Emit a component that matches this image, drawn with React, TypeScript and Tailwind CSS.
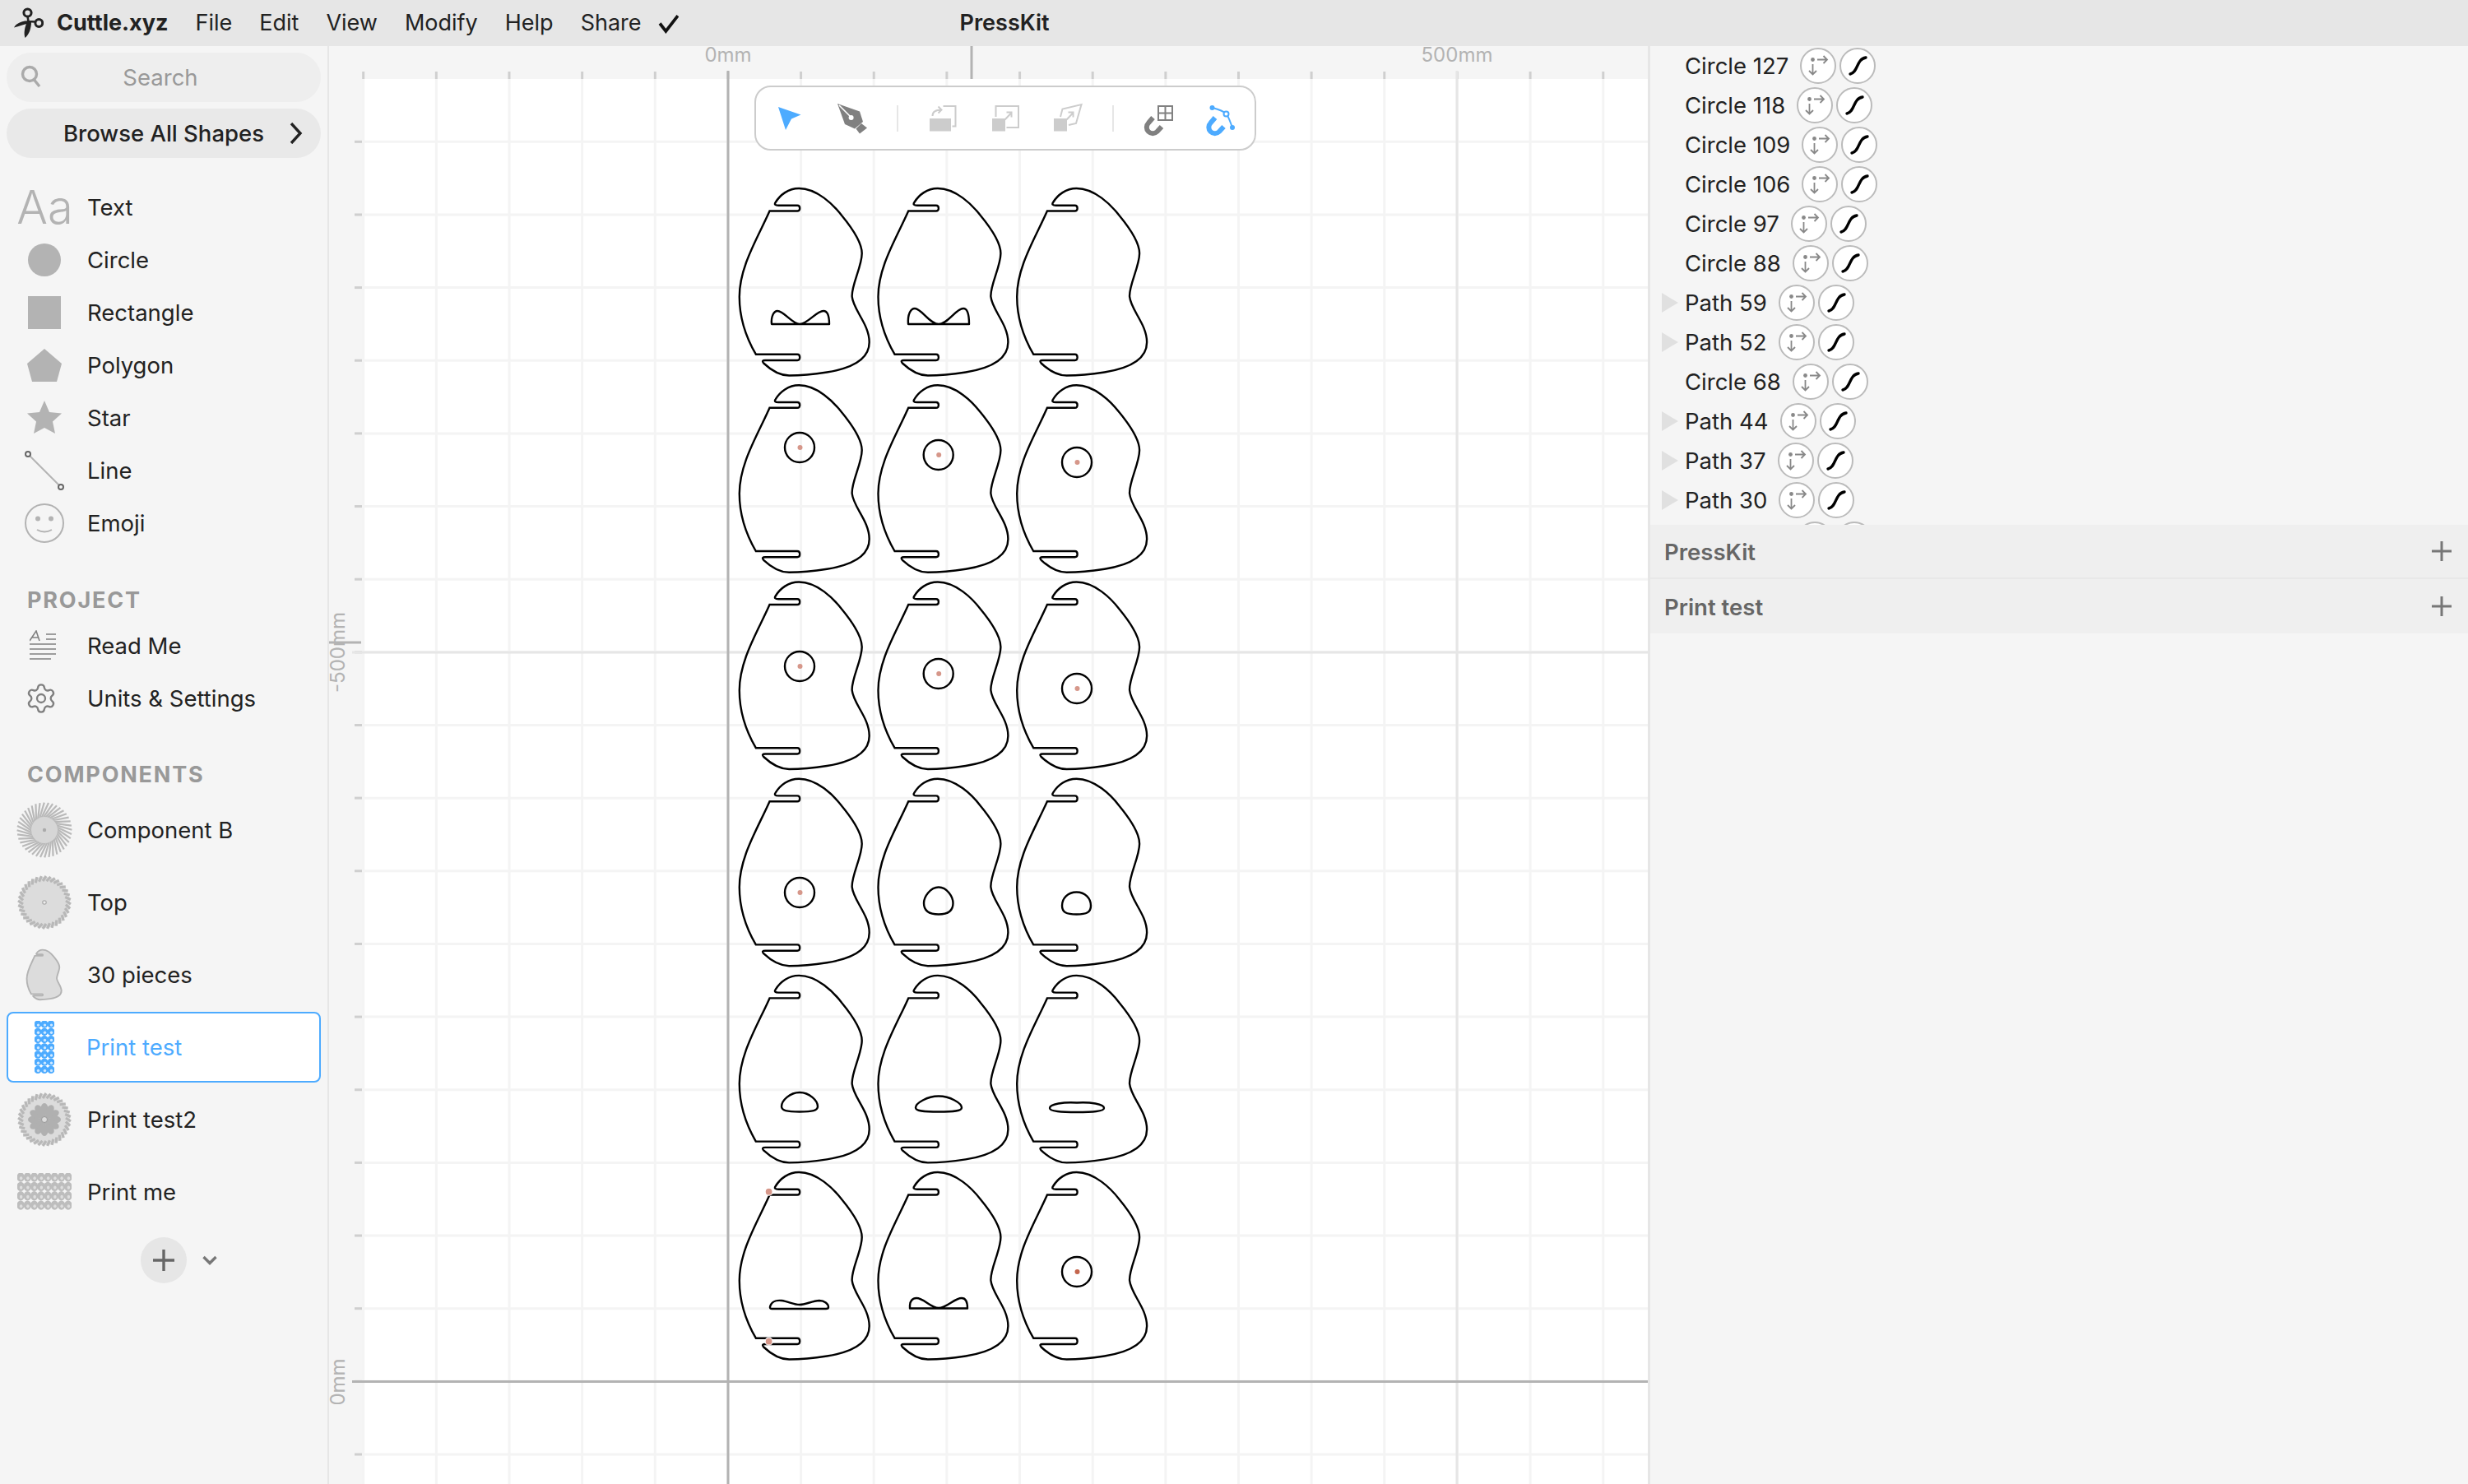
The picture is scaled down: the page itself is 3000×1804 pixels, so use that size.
import React from "react";
import { Settings } from "lucide-react";

const FONT = "font-['Inter','Liberation_Sans',sans-serif]";

const PIECE =
  "M-2 20.7 L-25 20.7 Q-31 20.7 -28.5 17 C-23 8 -13 0 0 0 C22 0 42 20 52 33 C66 50 76.5 66 76.5 79 C76.5 95 63.5 118 64.5 131.7 C66 148 85.5 165 85.5 187 C85.5 209 62 219 34 223.5 C15 226.5 2 227.5 -12 227.5 C-24 227.5 -35 220 -43 212.5 Q-46 209 -41 209 L-2 209 Q1 209 1 205.3 Q1 201.7 -2 201.7 L-52.4 201.7 C-65 180 -72.4 158 -72.4 131.7 C-72.4 95 -50 60 -35.7 27.5 L-2 27.5 Q1 27.5 1 24 Q1 20.7 -2 20.7 Z";

const COLS = [971.2, 1139.9, 1308.6];
const ROW_TOPS = [229, 468.3, 707.5, 946.7, 1185.9, 1425];
const H_GRID = Array.from({ length: 19 }, (_, i) => 172.3 + i * 88.65);
const V_GRID = Array.from({ length: 18 }, (_, i) => 441.7 + i * 88.65);

function Piece({ x, y }: { x: number; y: number }) {
  return <path d={PIECE} transform={`translate(${x} ${y})`} fill="none" stroke="#000" strokeWidth={2.4} />;
}

function Hole({ x, y, dark }: { x: number; y: number; dark?: boolean }) {
  return (
    <g>
      <circle cx={x} cy={y} r={18} fill="none" stroke="#000" strokeWidth={2.4} />
      <circle cx={x + 0.5} cy={y} r={3} fill={dark ? "#c4664e" : "#d6978a"} />
    </g>
  );
}

function CanvasDrawing() {
  return (
    <svg viewBox="400 56 1603 1748" className="block w-full h-full">
      <rect x={400} y={56} width={1603} height={1748} fill="#f5f5f5" />
      <rect x={443} y={96} width={1560} height={1708} fill="#fff" />
      {V_GRID.map((x, i) => (
        <g key={i}>
          <line x1={x} x2={x} y1={96} y2={1804} stroke="#f4f4f4" strokeWidth={3} />
          <line x1={x} x2={x} y1={87} y2={96} stroke="#cfcfcf" strokeWidth={3} />
        </g>
      ))}
      {H_GRID.map((y, i) => (
        <g key={i}>
          <line x1={443} x2={2003} y1={y} y2={y} stroke="#f4f4f4" strokeWidth={3} />
          <line x1={431} x2={440} y1={y} y2={y} stroke="#cfcfcf" strokeWidth={3} />
        </g>
      ))}
      <line x1={1771} x2={1771} y1={86} y2={1804} stroke="#e6e6e6" strokeWidth={3} />
      <line x1={428} x2={2003} y1={792.9} y2={792.9} stroke="#e6e6e6" strokeWidth={3} />
      <line x1={885} x2={885} y1={86} y2={1804} stroke="#b3b3b3" strokeWidth={3} />
      <line x1={428} x2={2003} y1={1679.5} y2={1679.5} stroke="#b3b3b3" strokeWidth={3} />
      <line x1={1181} x2={1181} y1={56} y2={96} stroke="#b3b3b3" strokeWidth={3} />
      <line x1={400} x2={439} y1={781} y2={781} stroke="#b3b3b3" strokeWidth={3} />

      <g fontFamily="Inter, 'Liberation Sans', sans-serif" fontSize={24} fill="#b3b3b3" textAnchor="middle">
        <text x={885} y={75}>0mm</text>
        <text x={1771} y={75}>500mm</text>
        <text transform="translate(419 793) rotate(-90)">-500mm</text>
        <text transform="translate(419 1680) rotate(-90)">0mm</text>
      </g>

      {ROW_TOPS.map((y, r) => COLS.map((x, c) => <Piece key={`${r}-${c}`} x={x} y={y} />))}

      <g fill="none" stroke="#000" strokeWidth={2.4} strokeLinejoin="round">
        <path d="M938 394 C937 384 941 378 945 378 C953 378 963 394 972 394 C982 394 992 378 1001 378 C1007 378 1008 386 1008 394 Z" />
        <path d="M1104 394 C1103 382 1107 375 1112 375 C1120 375 1130 394 1141 394 C1152 394 1162 375 1171 375 C1177 375 1178 384 1178 394 Z" />
        <path d="M1141 1078.5 C1151 1078.5 1158.5 1090 1158.5 1098 C1158.5 1108 1152 1111.5 1141 1111.5 C1130 1111.5 1123 1108 1123 1098 C1123 1090 1131 1078.5 1141 1078.5 Z" />
        <path d="M1308.6 1084.5 C1319 1084.5 1326 1092 1326 1101 C1326 1109 1321 1111.5 1308.6 1111.5 C1296 1111.5 1291 1109 1291 1101 C1291 1092 1298 1084.5 1308.6 1084.5 Z" />
        <path d="M972 1328 C984 1328 994 1338 994 1345 C994 1350 988 1351.5 972 1351.5 C956 1351.5 950 1350 950 1345 C950 1338 960 1328 972 1328 Z" />
        <path d="M1141 1332.5 C1155 1332.5 1169 1341 1169 1346.5 C1169 1350.5 1160 1351.5 1141 1351.5 C1122 1351.5 1113 1350.5 1113 1346.5 C1113 1341 1127 1332.5 1141 1332.5 Z" />
        <path d="M1309 1340.5 C1325 1339.5 1342 1342 1342 1347 C1342 1351 1328 1352 1309 1352 C1290 1352 1276 1351 1276 1347 C1276 1342 1293 1339.5 1309 1340.5 Z" />
        <path d="M938 1591 Q935 1591 936.5 1587 C939 1581 946 1580.5 950 1581 C958 1582 965 1586 972 1586 C979 1586 987 1581.5 996 1581 C1002 1581 1007 1585 1007 1589 Q1007 1591 1004 1591 Z" />
        <path d="M1106 1590.5 L1106 1587 C1106 1582 1109 1578 1114 1578 C1123 1578 1131 1590 1141 1590 C1151 1590 1160 1578 1169 1578 C1174 1578 1176 1582 1176 1590.5 Z" />
      </g>

      <Hole x={972} y={544} />
      <Hole x={1140.7} y={553} />
      <Hole x={1309} y={562} />
      <Hole x={972} y={810} />
      <Hole x={1140.7} y={819} />
      <Hole x={1309} y={837} />
      <Hole x={972} y={1085} />
      <Hole x={1309} y={1546} dark />

      <circle cx={934.6} cy={1448.7} r={4.5} fill="#d6978a" stroke="#fff" strokeWidth={1.2} />
      <circle cx={934.6} cy={1630.7} r={4.5} fill="#d6978a" stroke="#fff" strokeWidth={1.2} />
    </svg>
  );
}

function ToolIcon({ cx, children }: { cx: number; children: React.ReactNode }) {
  return (
    <svg viewBox={`${cx - 38} 106 76 75`} className="block w-[76px] h-[75px] shrink-0">
      {children}
    </svg>
  );
}

function Separator() {
  return (
    <div className="w-[34px] flex justify-center shrink-0">
      <div className="w-[2px] h-[32px] bg-[#e6e6e6]" />
    </div>
  );
}

function Toolbar() {
  const light = "#cccccc";
  return (
    <div className="absolute left-[517px] top-[48px] w-[610px] h-[79px] rounded-[20px] border-2 border-[#cccccc] bg-white flex items-center pl-[3px]">
      <ToolIcon cx={960}>
        <path d="M946 130 L973.5 139.5 L962 144.5 L955 158 Z" fill="#4dabff" />
      </ToolIcon>
      <ToolIcon cx={1036}>
        <path d="M1018 126 L1045 135.5 L1049 148 L1039 156.5 L1027 151 Z" fill="#808080" />
        <path d="M1020 128 L1034 142" stroke="#fff" strokeWidth={1.6} />
        <circle cx={1034.6} cy={143} r={3} fill="#fff" />
        <path d="M1047 150 L1054 155.5 L1045 162.5 L1040.5 156.5 Z" fill="#808080" />
      </ToolIcon>
      <Separator />
      <ToolIcon cx={1146}>
        <rect x={1130} y={144} width={26} height={15.5} fill={light} />
        <path d="M1146.5 129 L1161.5 129 L1161.5 153.5 L1157.5 153.5" fill="none" stroke={light} strokeWidth={2} />
        <path d="M1133.5 141 C1133.5 136 1137 133.5 1144 133.5 M1140.5 129.5 L1144.5 133.5 L1140.5 137.5" fill="none" stroke={light} strokeWidth={2} />
      </ToolIcon>
      <ToolIcon cx={1222}>
        <rect x={1206} y={144} width={16} height={15.5} fill={light} />
        <path d="M1210.5 142 L1210.5 129 L1238 129 L1238 155 L1223.5 155" fill="none" stroke={light} strokeWidth={2} />
        <path d="M1221.5 145.5 L1229.5 137 M1223.5 136.5 L1229.5 136.5 L1229.5 142.5" fill="none" stroke={light} strokeWidth={2} />
      </ToolIcon>
      <ToolIcon cx={1299}>
        <rect x={1282} y={144} width={16} height={15.5} fill={light} />
        <path d="M1290 142 L1292.5 132.5 L1315.5 127 L1309 150 L1300 152" fill="none" stroke={light} strokeWidth={2} />
        <path d="M1297.5 145.5 L1305.5 137 M1299.5 136.5 L1305.5 136.5 L1305.5 142.5" fill="none" stroke={light} strokeWidth={2} />
      </ToolIcon>
      <Separator />
      <ToolIcon cx={1407}>
        <path d="M1400.5 143 L1395 149.5 A7.4 7.4 0 0 0 1405.5 160 L1411 154" fill="none" stroke="#808080" strokeWidth={6} />
        <rect x={1407} y={129} width={17} height={17} fill="#fff" stroke="#808080" strokeWidth={2} />
        <path d="M1415.5 129 L1415.5 146 M1407 137.5 L1424 137.5" stroke="#808080" strokeWidth={2} />
      </ToolIcon>
      <ToolIcon cx={1483}>
        <path d="M1476 143 L1470.5 149.5 A7.4 7.4 0 0 0 1481 160 L1486.5 154" fill="none" stroke="#4dabff" strokeWidth={6} />
        <path d="M1473 131 C1480 133 1486 135 1489.5 138 C1493 143 1495 150 1497 155" fill="none" stroke="#4dabff" strokeWidth={2} />
        <circle cx={1472.5} cy={131} r={3} fill="#4dabff" />
        <circle cx={1489.5} cy={138.5} r={3} fill="#fff" stroke="#4dabff" strokeWidth={2} />
        <circle cx={1497} cy={155} r={3} fill="#4dabff" />
      </ToolIcon>
    </div>
  );
}

function Logo() {
  return (
    <svg viewBox="18 8 36 40" className="w-[36px] h-[40px] shrink-0">
      <circle cx={34.5} cy={15.5} r={4.6} fill="none" stroke="#222" strokeWidth={3} />
      <circle cx={48.3} cy={28} r={4.4} fill="none" stroke="#222" strokeWidth={3} />
      <path d="M34.5 20 L35.5 26 L44 26.5" fill="none" stroke="#222" strokeWidth={2.6} />
      <path d="M18 33.5 C21 28 28 25 38 25 L38 28 C30 29.5 24 32 18 33.5 Z" fill="#222" />
      <path d="M34 26 L39 27 C39 34 36.5 42 31.5 46 C29.5 41 31 33 34 26 Z" fill="#222" />
    </svg>
  );
}

function Header() {
  const menus = ["File", "Edit", "View", "Modify", "Help", "Share"];
  return (
    <div className="h-14 bg-[#e6e6e6] flex items-center pl-[17px] shrink-0 text-[27px] text-[#222]">
      <Logo />
      <span className="ml-[16px] font-bold pt-[1px]">Cuttle.xyz</span>
      <div className="ml-[33px] flex gap-[33px] pt-[1px]">
        {menus.map((m) => (
          <span key={m}>{m}</span>
        ))}
      </div>
      <svg viewBox="0 0 24 24" className="ml-[20px] w-[25px] h-[25px]" fill="none" stroke="#111" strokeWidth={3.6}>
        <path d="M2 12 L9 21 L23 3" />
      </svg>
      <span className="ml-[342px] font-semibold pt-[1px]">PressKit</span>
    </div>
  );
}

function Search() {
  return (
    <div className="h-[60px] rounded-[30px] bg-[#eeeeee] relative flex items-center justify-center text-[27.5px] text-[#999]">
      <svg viewBox="0 0 28 28" className="absolute left-[16px] top-[15px] w-[28px] h-[28px]" fill="none" stroke="#aaa" strokeWidth={3.4}>
        <circle cx={12} cy={11} r={8.5} />
        <path d="M17.5 18 L24 26" />
      </svg>
      <span className="mr-[8px] pt-[2px]">Search</span>
    </div>
  );
}

function ShapeIcon({ kind }: { kind: string }) {
  const gray = "#b3b3b3";
  if (kind === "text")
    return <span className="text-[56px] font-light text-[#b3b3b3] leading-none ml-[1px]">Aa</span>;
  return (
    <svg viewBox="0 0 52 52" className="w-[52px] h-[52px]">
      {kind === "circle" && <circle cx={26} cy={26} r={20} fill={gray} />}
      {kind === "rect" && <rect x={6} y={6} width={40} height={40} fill={gray} />}
      {kind === "polygon" && <path d="M26 6 L47 24 L41 46 L11 46 L5 24 Z" fill={gray} />}
      {kind === "star" && <path d="M26 5 L32 19 L47 20.5 L36 30.5 L39 45 L26 38 L13 45 L16 30.5 L5 20.5 L20 19 Z" fill={gray} />}
      {kind === "line" && (
        <g>
          <line x1={7} y1={7} x2={45} y2={45} stroke={gray} strokeWidth={2} />
          <circle cx={6} cy={6} r={3} fill="#f5f5f5" stroke="#666" strokeWidth={2} />
          <circle cx={46} cy={46} r={3} fill="#f5f5f5" stroke="#666" strokeWidth={2} />
        </g>
      )}
      {kind === "emoji" && (
        <g>
          <circle cx={26} cy={26} r={23} fill="none" stroke={gray} strokeWidth={2} />
          <circle cx={18} cy={20.5} r={3} fill={gray} />
          <circle cx={34} cy={20.5} r={3} fill={gray} />
          <path d="M17 34 Q26 39 35 34" fill="none" stroke={gray} strokeWidth={2} />
        </g>
      )}
    </svg>
  );
}

function ReadMeIcon() {
  return (
    <svg viewBox="0 0 32 38" className="w-[32px] h-[38px] mr-[4px]" fill="none" stroke="#808080" strokeWidth={1.6}>
      <path d="M0 13 L8 1 L12 13 M3 9 L11 9 M20 5 L32 5 M20 11 L32 11 M0 17 L32 17 M0 23 L32 23 M0 29 L32 29 M0 35 L26 35" />
    </svg>
  );
}

function RadialThumb() {
  const spokes = Array.from({ length: 40 }, (_, i) => (i * 360) / 40);
  return (
    <svg viewBox="-34 -34 68 68" className="w-[68px] h-[68px]">
      {spokes.map((a) => (
        <line key={a} x1={14} y1={-4} x2={33} y2={5} transform={`rotate(${a})`} stroke="#b9b9b9" strokeWidth={2.2} />
      ))}
      <circle r={16} fill="#d6d6d6" />
      <circle r={2.2} fill="#aaa" />
    </svg>
  );
}

function Rim({ r }: { r: number }) {
  const n = Array.from({ length: 36 }, (_, i) => (i * 360) / 36);
  return (
    <g>
      <circle r={r - 1} fill="#dcdcdc" />
      {n.map((a) => (
        <line key={a} x1={r - 6} y1={-2} x2={r} y2={2} transform={`rotate(${a})`} stroke="#b8b8b8" strokeWidth={3.2} />
      ))}
    </g>
  );
}

function TopThumb() {
  return (
    <svg viewBox="-34 -34 68 68" className="w-[68px] h-[68px]">
      <Rim r={32} />
      <circle r={2.2} fill="#eee" stroke="#aaa" strokeWidth={1.2} />
    </svg>
  );
}

function FlowerThumb() {
  const petals = Array.from({ length: 12 }, (_, i) => i * 30);
  return (
    <svg viewBox="-34 -34 68 68" className="w-[68px] h-[68px]">
      <Rim r={32} />
      {petals.map((a) => (
        <ellipse key={a} cx={0} cy={-13} rx={4.5} ry={7} transform={`rotate(${a})`} fill="#b0b0b0" />
      ))}
      <circle r={7} fill="#b0b0b0" />
      <circle r={3.5} fill="#ddd" stroke="#999" strokeWidth={1} />
    </svg>
  );
}

function PieceThumb() {
  return (
    <svg viewBox="-78 -6 172 240" className="w-[46px] h-[64px]">
      <path d={PIECE} fill="#dcdcdc" stroke="#b3b3b3" strokeWidth={7} />
    </svg>
  );
}

function DotGrid({ cols, rows, color, hole, w, h }: { cols: number; rows: number; color: string; hole: string; w: string; h: string }) {
  const cells: React.ReactNode[] = [];
  for (let r = 0; r < rows; r++)
    for (let c = 0; c < cols; c++)
      cells.push(
        <g key={`${r}-${c}`}>
          <circle cx={4 + c * 8} cy={4 + r * 9} r={4.5} fill={color} />
          <circle cx={4.5 + c * 8} cy={5 + r * 9} r={1.7} fill={hole} />
        </g>
      );
  return (
    <svg viewBox={`0 0 ${cols * 8} ${rows * 9 + 0.5}`} preserveAspectRatio="none" className={`${w} ${h}`}>
      {cells}
    </svg>
  );
}

function Row({ icon, label, h = "h-16" }: { icon: React.ReactNode; label: string; h?: string }) {
  return (
    <div className={`${h} flex items-center`}>
      <div className="w-[108px] flex justify-center shrink-0">{icon}</div>
      <span className="text-[27.5px] -ml-[2px] pt-[2px]">{label}</span>
    </div>
  );
}

function Sidebar() {
  const shapes = [
    ["text", "Text"],
    ["circle", "Circle"],
    ["rect", "Rectangle"],
    ["polygon", "Polygon"],
    ["star", "Star"],
    ["line", "Line"],
    ["emoji", "Emoji"],
  ];
  return (
    <div className="w-[400px] shrink-0 h-full bg-[#f5f5f5] border-r-2 border-[#e6e6e6] text-[#222]">
      <div className="px-2 pt-2 flex flex-col gap-2">
        <Search />
        <div className="h-[60px] rounded-[30px] bg-[#e9e9e9] flex items-center pl-[69px] text-[27.5px] font-medium">
          <span className="pt-[2px]">Browse All Shapes</span>
          <svg viewBox="0 0 16 26" className="ml-[31px] w-[16px] h-[26px]" fill="none" stroke="#222" strokeWidth={3.4}>
            <path d="M2 1 L13 13 L2 25" />
          </svg>
        </div>
      </div>
      <div className="mt-7">
        {shapes.map(([k, l]) => (
          <Row key={k} icon={<ShapeIcon kind={k} />} label={l} />
        ))}
      </div>
      <div className="h-[85px] pt-[39px] pl-[33px] flex items-center text-[27px] font-bold tracking-[1.8px] text-[#999]">PROJECT</div>
      <Row icon={<ReadMeIcon />} label="Read Me" />
      <Row icon={<Settings size={40} strokeWidth={1.4} color="#808080" className="mr-[8px]" />} label="Units & Settings" />
      <div className="h-[84px] pt-[38px] pl-[33px] flex items-center text-[27px] font-bold tracking-[1.8px] text-[#999]">COMPONENTS</div>
      <Row h="h-[88px]" icon={<RadialThumb />} label="Component B" />
      <Row h="h-[88px]" icon={<TopThumb />} label="Top" />
      <Row h="h-[88px]" icon={<PieceThumb />} label="30 pieces" />
      <div className="h-[88px] px-2 py-[1px]">
        <div className="h-[86px] bg-white border-2 border-[#4dabff] rounded-[8px] flex items-center text-[#4dabff]">
          <div className="w-[88px] flex justify-center shrink-0 mr-[8px]">
            <DotGrid cols={3} rows={7} color="#4dabff" hole="#cfe8ff" w="w-[24px]" h="h-[65px]" />
          </div>
          <span className="text-[27.5px] -ml-[1px] pt-[2px]">Print test</span>
        </div>
      </div>
      <Row h="h-[88px]" icon={<FlowerThumb />} label="Print test2" />
      <Row h="h-[88px]" icon={<DotGrid cols={8} rows={4} color="#bdbdbd" hole="#dedede" w="w-[66px]" h="h-[46px]" />} label="Print me" />
      <div className="mt-[11px] flex items-center pl-[171px]">
        <div className="w-14 h-14 rounded-full bg-[#e6e6e6] flex items-center justify-center">
          <svg viewBox="0 0 26 26" className="w-[26px] h-[26px]" stroke="#666" strokeWidth={3.4}>
            <path d="M13 0 L13 26 M0 13 L26 13" />
          </svg>
        </div>
        <svg viewBox="0 0 18 12" className="ml-[19px] w-[18px] h-[12px]" fill="none" stroke="#777" strokeWidth={3.4}>
          <path d="M1.5 2 L9 9.5 L16.5 2" />
        </svg>
      </div>
    </div>
  );
}

function RoundButtons() {
  return (
    <div className="flex gap-[4px] ml-[14px] shrink-0">
      <div className="w-[44px] h-[44px] rounded-full bg-white border-2 border-[#bbbbbb] flex items-center justify-center">
        <svg viewBox="0 0 40 40" className="w-[40px] h-[40px]" fill="none" stroke="#888" strokeWidth={1.8}>
          <circle cx={13.5} cy={12.5} r={2.4} fill="#888" stroke="none" />
          <path d="M19 12.5 L31 12.5 M26.5 8 L31 12.5 L26.5 17 M13.5 18 L13.5 30.5 M9 26 L13.5 30.5 L18 26" />
        </svg>
      </div>
      <div className="w-[44px] h-[44px] rounded-full bg-white border-2 border-[#bbbbbb] flex items-center justify-center">
        <svg viewBox="0 0 40 40" className="w-[40px] h-[40px]" fill="none" stroke="#000" strokeWidth={3.4} strokeLinecap="round">
          <path d="M11 30 C21 28 18 12 30 10" />
        </svg>
      </div>
    </div>
  );
}

function LayerRow({ name, expandable }: { name: string; expandable?: boolean }) {
  return (
    <div className="h-12 flex items-center pl-[14px] shrink-0 text-[27.5px] text-[#222]">
      <div className="w-[28px] shrink-0">
        {expandable && (
          <svg viewBox="0 0 20 24" className="w-[20px] h-[24px]">
            <path d="M0 0 L20 12 L0 24 Z" fill="#e0e0e0" />
          </svg>
        )}
      </div>
      {name ? <span className="pt-[2px]">{name}</span> : <div className="w-[122px] shrink-0" />}
      <RoundButtons />
    </div>
  );
}

function RightPanel() {
  const layers: [string, boolean][] = [
    ["Circle 127", false],
    ["Circle 118", false],
    ["Circle 109", false],
    ["Circle 106", false],
    ["Circle 97", false],
    ["Circle 88", false],
    ["Path 59", true],
    ["Path 52", true],
    ["Circle 68", false],
    ["Path 44", true],
    ["Path 37", true],
    ["Path 30", true],
    ["", false],
  ];
  return (
    <div className="w-[997px] shrink-0 h-full bg-[#f5f5f5] border-l-[3px] border-[#e6e6e6] flex flex-col">
      <div className="h-[582px] overflow-hidden flex flex-col shrink-0">
        {layers.map(([n, e], i) => (
          <LayerRow key={i} name={n} expandable={e} />
        ))}
      </div>
      {["PressKit", "Print test"].map((t) => (
        <div key={t} className="h-[66px] bg-[#efefef] border-b-2 last:border-b-0 border-[#e8e8e8] flex items-center justify-between pl-[17px] pr-[20px] shrink-0">
          <span className="text-[27.5px] font-semibold text-[#666] pt-[3px]">{t}</span>
          <svg viewBox="0 0 24 24" className="w-[24px] h-[24px]" stroke="#777" strokeWidth={3}>
            <path d="M12 0 L12 24 M0 12 L24 12" />
          </svg>
        </div>
      ))}
    </div>
  );
}

export default function App() {
  return (
    <div className={`w-[3000px] h-[1804px] flex flex-col overflow-hidden ${FONT}`}>
      <Header />
      <div className="flex flex-1 min-h-0">
        <Sidebar />
        <div className="relative w-[1603px] shrink-0 h-full">
          <CanvasDrawing />
          <Toolbar />
        </div>
        <RightPanel />
      </div>
    </div>
  );
}
